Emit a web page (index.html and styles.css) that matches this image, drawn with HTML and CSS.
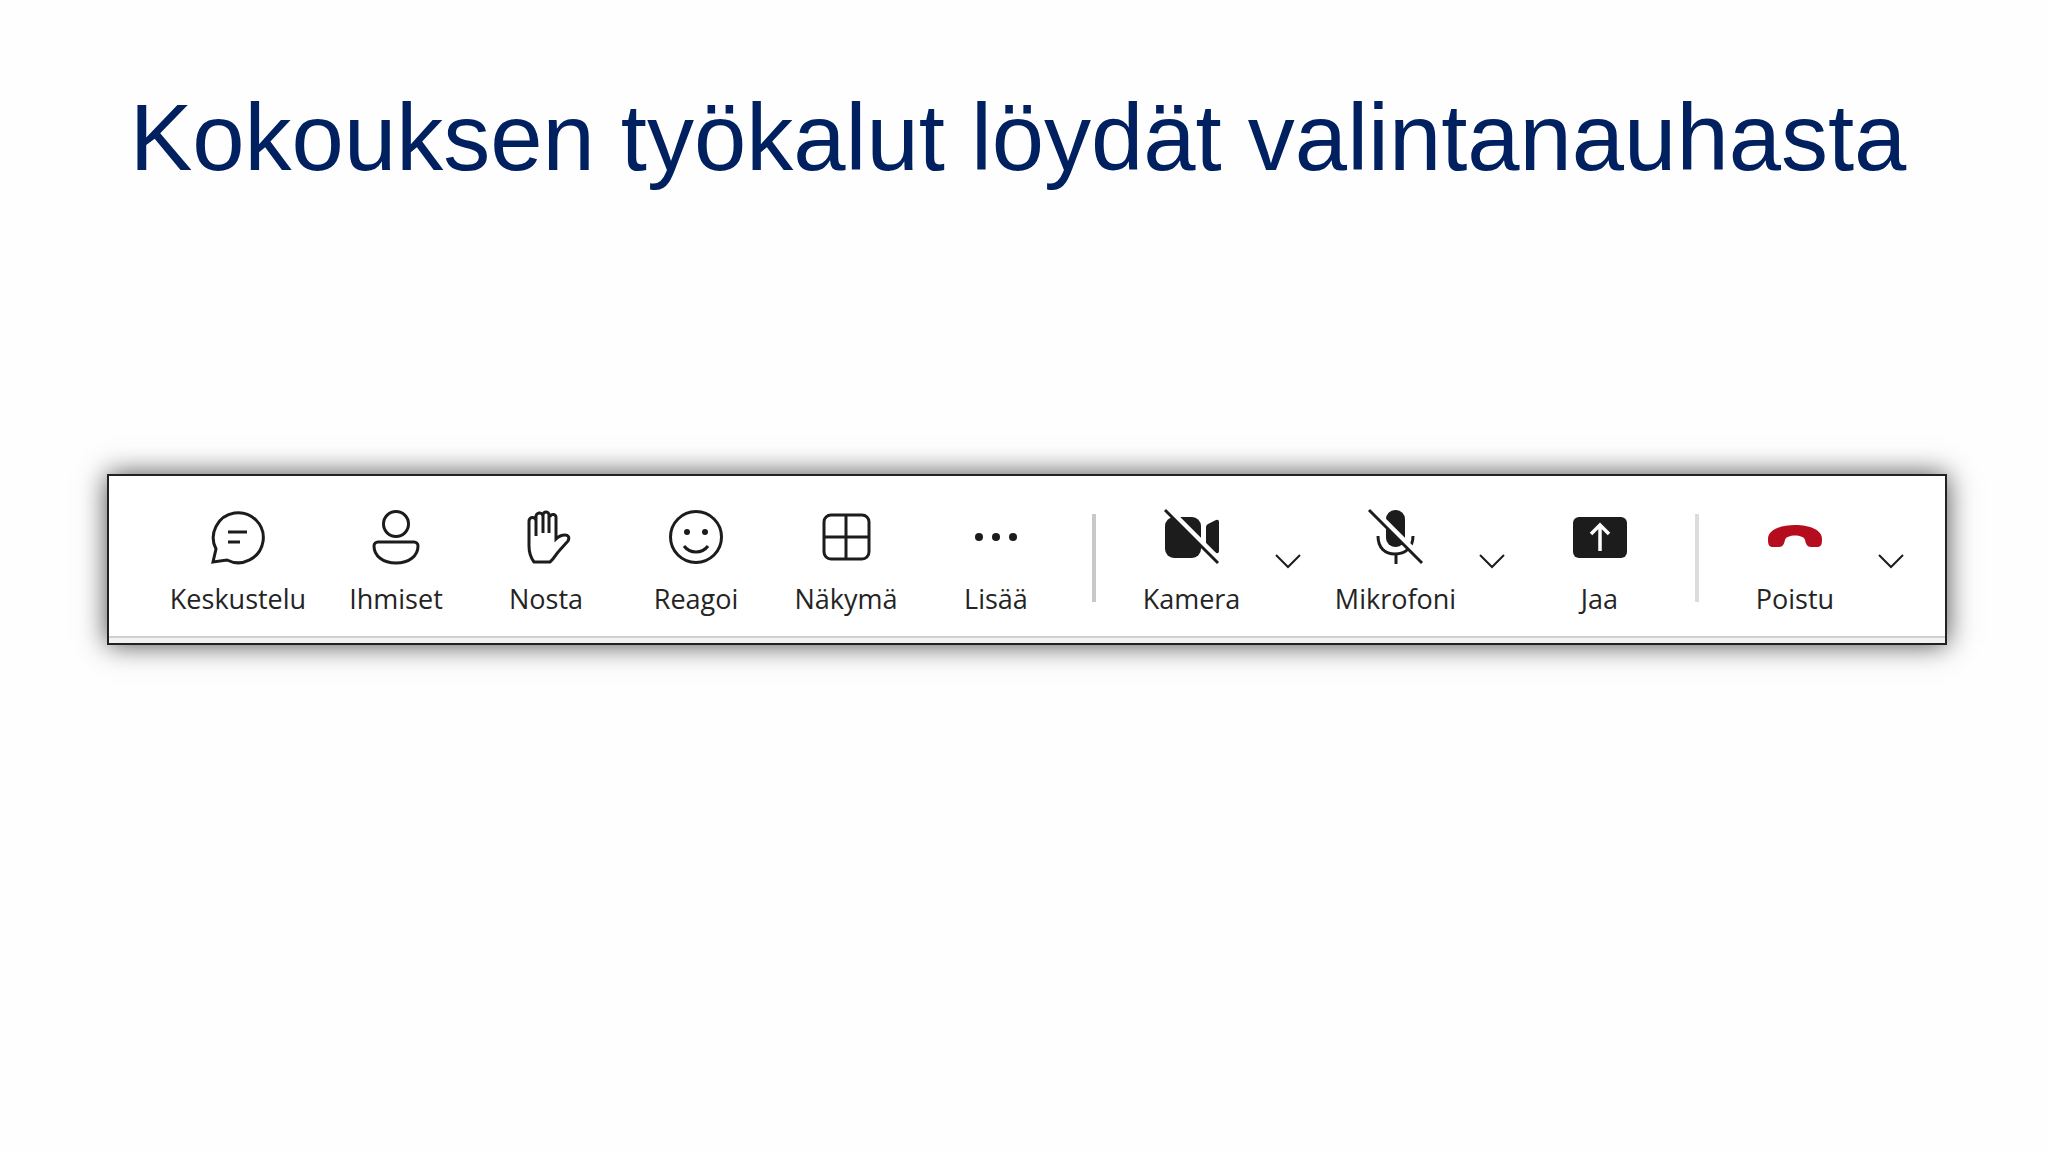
FILE: index.html
```
<!DOCTYPE html>
<html lang="fi">
<head>
    <meta charset="UTF-8">
    <meta name="viewport" content="width=device-width, initial-scale=1.0">
    <title>Kokouksen työkalut</title>
    <link rel="stylesheet" href="styles.css">
</head>
<body>
    <main class="slide">
        <h1>Kokouksen työkalut löydät valintanauhasta</h1>

        <div class="toolbar" role="toolbar" aria-label="Kokouksen työkalut">
            <div class="tools">
                <div class="group">
                    <button type="button" class="tool first">
                        <svg class="icon" viewBox="0 0 54 54">
                            <path d="M5 39A25 25 0 1 1 16 50L2 52Z"/>
                            <path d="M17 22h19M17 32h12" stroke-width="3"/>
                        </svg>
                        <span>Keskustelu</span>
                    </button>
                    <button type="button" class="tool">
                        <svg class="icon" viewBox="0 0 54 54">
                            <circle cx="27" cy="14" r="12.500"/>
                            <path d="M9 32h36a4 4 0 0 1 4 4c0 10-9 17-22 17S5 46 5 36a4 4 0 0 1 4-4z"/>
                        </svg>
                        <span>Ihmiset</span>
                    </button>
                    <button type="button" class="tool">
                        <svg class="icon" viewBox="0 0 54 54">
                            <path d="M17 26V11a3 3 0 0 0-7 0v25c0 7 2 12 5 16h16c4-3 6-8 9-11l9-10c2-4 0-6-3-6-4 0-6 1-9 4V8a3 3 0 0 0-6-1M30 23V5a3 3 0 0 0-6 0v18M24 6a3 3 0 0 0-7 1v4"/>
                        </svg>
                        <span>Nosta</span>
                    </button>
                    <button type="button" class="tool">
                        <svg class="icon" viewBox="0 0 54 54">
                            <circle cx="27" cy="27" r="25.500"/>
                            <circle class="solid" cx="18" cy="22" r="3"/>
                            <circle class="solid" cx="36" cy="22" r="3"/>
                            <path d="M15 36c6 8 18 8 24 0" stroke-width="3"/>
                        </svg>
                        <span>Reagoi</span>
                    </button>
                    <button type="button" class="tool">
                        <svg class="icon" viewBox="0 0 54 54">
                            <rect x="5" y="5" width="45" height="44" rx="7"/>
                            <path d="M27 5v44M5 27h45"/>
                        </svg>
                        <span>Näkymä</span>
                    </button>
                    <button type="button" class="tool">
                        <svg class="icon" viewBox="0 0 54 54">
                            <circle class="solid" cx="10" cy="27" r="4"/>
                            <circle class="solid" cx="27" cy="27" r="4"/>
                            <circle class="solid" cx="44" cy="27" r="4"/>
                        </svg>
                        <span>Lisää</span>
                    </button>
                </div>

                <div class="divider"></div>

                <div class="group devices">
                    <div class="split">
                        <button type="button" class="tool">
                            <svg class="icon" viewBox="0 0 54 54">
                                <rect class="solid" x="0" y="7" width="36" height="41" rx="9"/>
                                <path class="solid" d="M41 17q0-2 2-3l8-4q3-1 3 2v29q0 3-3 2l-8-4q-2-1-2-3z"/>
                                <path class="gap" d="M4 0l52 52"/>
                                <path d="M0 0l53 53"/>
                            </svg>
                            <span>Kamera</span>
                        </button>
                        <button type="button" class="more" aria-label="Kameran asetukset">
                            <svg class="chevron" viewBox="0 0 28 16"><path d="M2 2l12 12L26 2"/></svg>
                        </button>
                    </div>
                    <div class="split">
                        <button type="button" class="tool">
                            <svg class="icon" viewBox="0 0 54 54">
                                <rect class="solid" x="17" y="0" width="19" height="37" rx="9"/>
                                <path d="M9 26c0 12 7 18 17 18s18-6 18-18M27 44v10"/>
                                <path class="gap" d="M4 0l52 52"/>
                                <path d="M0 0l53 53"/>
                            </svg>
                            <span>Mikrofoni</span>
                        </button>
                        <button type="button" class="more" aria-label="Mikrofonin asetukset">
                            <svg class="chevron" viewBox="0 0 28 16"><path d="M2 2l12 12L26 2"/></svg>
                        </button>
                    </div>
                    <button type="button" class="tool">
                        <svg class="icon" viewBox="0 0 54 54">
                            <rect class="solid" x="0" y="7" width="54" height="41" rx="6"/>
                            <path class="arrow" d="M27 41V15M18 24l9-9 9 9"/>
                        </svg>
                        <span>Jaa</span>
                    </button>
                </div>

                <div class="divider light"></div>

                <div class="split">
                    <button type="button" class="tool">
                        <svg class="icon" viewBox="0 0 54 54">
                            <path class="hangup" d="M0 29c0-9 12-14 27-14s27 5 27 14c0 6-1 8-5 8h-6c-4 0-5-3-6-7-1-6-19-6-20 0-1 4-2 7-6 7H5c-4 0-5-2-5-8z"/>
                        </svg>
                        <span>Poistu</span>
                    </button>
                    <button type="button" class="more" aria-label="Poistumisen asetukset">
                        <svg class="chevron" viewBox="0 0 28 16"><path d="M2 2l12 12L26 2"/></svg>
                    </button>
                </div>
            </div>
        </div>
    </main>
</body>
</html>
```
FILE: styles.css
```
body {
    margin: 0;
    background-color: #fefefe;
    font-family: "Open Sans", "Noto Sans", sans-serif;
    color: #242424;
}
.slide {
    padding: 84px 101px 84px 107px;
}
h1 {
    margin: 0 0 282px;
    padding-right: 18px;
    font-family: "Liberation Sans", Arial, sans-serif;
    font-size: 94px;
    font-weight: normal;
    line-height: 108px;
    text-align: center;
    color: #002060;
}
.toolbar {
    border: 2px solid #222;
    background-color: #f3f3f3;
    padding-bottom: 5px;
    box-shadow: 0 0 26px rgba(0, 0, 0, 0.7);
}
.tools {
    display: flex;
    justify-content: space-between;
    padding: 34px 33px 19px 46px;
    border-bottom: 2px solid #d0d0d0;
    background-color: #fff;
}
.group, .split {
    display: flex;
}
.devices {
    gap: 12px;
}
button {
    padding: 0;
    border: none;
    background: none;
    font-family: inherit;
    color: inherit;
    cursor: pointer;
}
.tool {
    display: flex;
    flex-direction: column;
    align-items: center;
    gap: 17px;
    width: 150px;
    font-size: 27px;
    line-height: 36px;
}
.first {
    width: 166px;
}
.more {
    display: flex;
    justify-content: center;
    width: 42px;
    padding-top: 43px;
}
.divider {
    width: 4px;
    height: 88px;
    margin-top: 4px;
    background-color: #c8c8c8;
}
.light {
    background-color: #dcdcdc;
}
.icon {
    width: 54px;
    height: 54px;
    overflow: visible;
}
.chevron {
    width: 28px;
    height: 16px;
}
.icon, .chevron {
    fill: none;
    stroke: #1c1c1c;
    stroke-width: 3;
}
.chevron {
    stroke-width: 2;
}
.solid {
    fill: #1c1c1c;
    stroke: none;
}
.icon .gap {
    stroke: #fff;
    stroke-width: 6;
}
.icon .arrow {
    stroke: #fff;
    stroke-width: 3.5;
}
.hangup {
    fill: #b50d1e;
    stroke: none;
}
```
